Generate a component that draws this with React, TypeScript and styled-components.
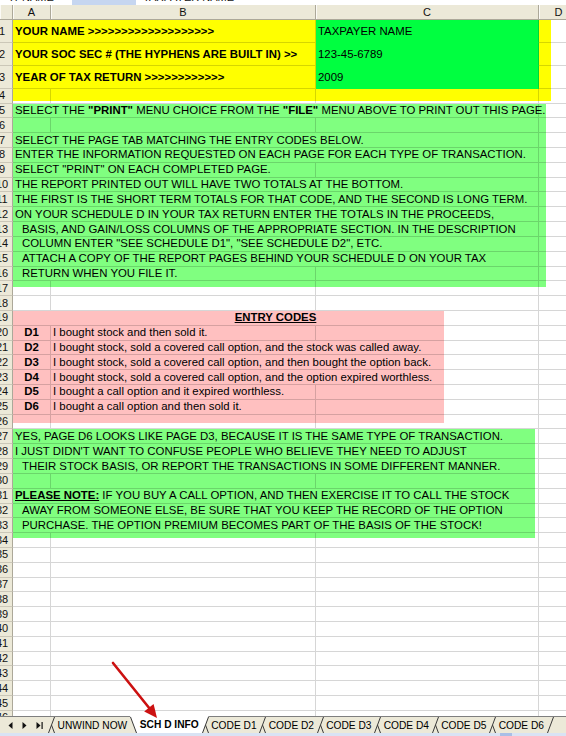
import React from 'react';
import styled, { createGlobalStyle } from 'styled-components';

const GlobalStyle = createGlobalStyle`
  html, body { margin: 0; padding: 0; width: 566px; height: 736px; overflow: hidden; background: #fff; }
  body { font-family: "Liberation Sans", Arial, sans-serif; color: #000; }
  #root { width: 566px; height: 736px; }
`;

const COLS = '13px 38px 265px 223px 40px';
const LINE = 'rgba(0,0,0,0.16)';
const Y = '#ffff00';
const G1 = '#00ff40';
const G2 = '#80ff80';
const P = '#ffc0c0';

const Page = styled.div`
  position: relative;
  width: 566px;
  height: 736px;
  display: flex;
  flex-direction: column;
  overflow: hidden;
`;

/* ---------- formula bar remnant ---------- */
const TopStrip = styled.div`
  height: 5px;
  flex: none;
  display: flex;
  overflow: hidden;
  background: #fff;
`;
const NameBox = styled.div`
  width: 64px;
  padding-left: 8px;
  flex: none;
`;
const FxArea = styled.div`
  width: 64px;
  flex: none;
  background: #c6d6f0;
`;
const FormulaArea = styled.div`
  flex: 1;
  padding-left: 7px;
`;
const StripText = styled.span`
  display: block;
  font-size: 11px;
  line-height: 11px;
  margin-top: -8px;
  white-space: pre;
  color: #111;
`;

/* ---------- sheet ---------- */
const Sheet = styled.div`
  flex: 1;
  min-height: 0;
  overflow: hidden;
`;
const HeaderRow = styled.div`
  display: grid;
  grid-template-columns: ${COLS};
  height: 15px;
  box-sizing: border-box;
  background: #ece9d8;
  border-bottom: 1px solid #aca899;
`;
const ColHead = styled.div`
  border-right: 1px solid #aca899;
  box-shadow: inset 1px 0 #fbfaf5;
  display: flex;
  align-items: center;
  justify-content: center;
  font-size: 11px;
  line-height: 1;
  color: #111;
`;
const Row = styled.div<{ $h: number }>`
  display: grid;
  grid-template-columns: ${COLS};
  height: ${(p) => p.$h}px;
`;
const RowHead = styled.div`
  box-sizing: border-box;
  background: #ece9d8;
  border-right: 1px solid #aca899;
  border-bottom: 1px solid #cbc7b8;
  display: flex;
  align-items: center;
  justify-content: flex-end;
  overflow: hidden;
`;
const RowNum = styled.span`
  flex: none;
  width: 20px;
  text-align: center;
  font-size: 11px;
  line-height: 1;
  color: #111;
`;

interface CellStyle {
  $span?: number;
  $fill?: string;
  $fw?: string;
  $fh?: string;
  $bold?: boolean;
  $center?: boolean;
  $indent?: number;
  $noBottom?: boolean;
}

const Cell = styled.div<CellStyle>`
  grid-column: span ${(p) => p.$span ?? 1};
  box-sizing: border-box;
  min-width: 0;
  border-right: 1px solid ${LINE};
  border-bottom: 1px solid ${(p) => (p.$noBottom ? 'transparent' : LINE)};
  background: ${(p) =>
    p.$fill
      ? `linear-gradient(${p.$fill}, ${p.$fill}) no-repeat 0 0 / ${p.$fw ?? '100%'} ${p.$fh ?? '100%'}`
      : 'transparent'};
  background-origin: border-box;
  display: flex;
  align-items: center;
  justify-content: ${(p) => (p.$center ? 'center' : 'flex-start')};
  padding: 0 2px 0 ${(p) => 2 + (p.$indent ?? 0)}px;
  font-size: 11.4px;
  font-weight: ${(p) => (p.$bold ? 700 : 400)};
  overflow: visible;
`;
const CellText = styled.span`
  position: relative;
  z-index: 1;
  white-space: pre;
  line-height: 13px;
`;
const Under = styled.span`
  text-decoration: underline;
  font-weight: 700;
`;
const B = styled.b`
  font-weight: 700;
`;

type CellSpec = {
  span?: number;
  fill?: string;
  fw?: string;
  fh?: string;
  content?: React.ReactNode;
  bold?: boolean;
  center?: boolean;
  indent?: number;
  noBottom?: boolean;
};
type RowSpec = { h: number; cells: CellSpec[] };

const RH = 14.825;
const IND = 7;

const greenText = (content: React.ReactNode, indent = 0, span = 3): CellSpec[] =>
  span === 3
    ? [{ span: 3, fill: G2, content, indent }, { fill: G2, fw: '7px' }]
    : [{ span: 2, fill: G2, content, indent }, { fill: G2 }, { fill: G2, fw: '7px' }];

const greenEmpty: CellSpec[] = [{ fill: G2 }, { fill: G2 }, { fill: G2 }, { fill: G2, fw: '7px' }];
const empty: CellSpec[] = [{}, {}, {}, {}];

const pinkShort = (code: string, text: string): CellSpec[] => [
  { fill: P, content: code, bold: true, center: true },
  { fill: P, content: text },
  { fill: P, fw: '128px' },
  {},
];
const pinkLong = (code: string, text: string): CellSpec[] => [
  { fill: P, content: code, bold: true, center: true },
  { span: 2, fill: P, fw: '393px', content: text },
  {},
];
const green2Text = (content: React.ReactNode, indent = 0): CellSpec[] => [
  { span: 3, fill: G2, fw: '522px', content, indent },
  {},
];

const rows: RowSpec[] = [
  {
    h: 23,
    cells: [
      { span: 2, fill: Y, bold: true, content: 'YOUR NAME ' + '>'.repeat(19) },
      { fill: G1, content: 'TAXPAYER NAME', noBottom: true },
      { fill: Y, fw: '12px' },
    ],
  },
  {
    h: 23,
    cells: [
      { span: 2, fill: Y, bold: true, content: 'YOUR SOC SEC # (THE HYPHENS ARE BUILT IN) >>' },
      { fill: G1, content: '123-45-6789', noBottom: true },
      { fill: Y, fw: '12px' },
    ],
  },
  {
    h: 23,
    cells: [
      { span: 2, fill: Y, bold: true, content: 'YEAR OF TAX RETURN ' + '>'.repeat(12) },
      { fill: G1, content: '2009', noBottom: true },
      { fill: Y, fw: '12px' },
    ],
  },
  {
    h: 14.6,
    cells: [
      { fill: Y, fh: '12px' },
      { fill: Y, fh: '12px' },
      { fill: Y, fh: '12px' },
      { fill: Y, fw: '12px', fh: '12px' },
    ],
  },
  {
    h: RH,
    cells: greenText(
      <>
        SELECT THE <B>"PRINT"</B> MENU CHOICE FROM THE <B>"FILE"</B> MENU ABOVE TO PRINT OUT THIS PAGE.
      </>
    ),
  },
  { h: RH, cells: greenEmpty },
  { h: RH, cells: greenText('SELECT THE PAGE TAB MATCHING THE ENTRY CODES BELOW.') },
  { h: RH, cells: greenText('ENTER THE INFORMATION REQUESTED ON EACH PAGE FOR EACH TYPE OF TRANSACTION.') },
  { h: RH, cells: greenText('SELECT "PRINT" ON EACH COMPLETED PAGE.', 0, 2) },
  { h: RH, cells: greenText('THE REPORT PRINTED OUT WILL HAVE TWO TOTALS AT THE BOTTOM.') },
  { h: RH, cells: greenText('THE FIRST IS THE SHORT TERM TOTALS FOR THAT CODE, AND THE SECOND IS LONG TERM.') },
  { h: RH, cells: greenText('ON YOUR SCHEDULE D IN YOUR TAX RETURN ENTER THE TOTALS IN THE PROCEEDS,') },
  { h: RH, cells: greenText('BASIS, AND GAIN/LOSS COLUMNS OF THE APPROPRIATE SECTION. IN THE DESCRIPTION', IND) },
  { h: RH, cells: greenText('COLUMN ENTER "SEE SCHEDULE D1", "SEE SCHEDULE D2", ETC.', IND) },
  { h: RH, cells: greenText('ATTACH A COPY OF THE REPORT PAGES BEHIND YOUR SCHEDULE D ON YOUR TAX', IND) },
  { h: RH, cells: greenText('RETURN WHEN YOU FILE IT.', IND, 2) },
  {
    h: RH,
    cells: [
      { fill: G2, fh: '6px' },
      { fill: G2, fh: '6px' },
      { fill: G2, fh: '6px' },
      { fill: G2, fw: '7px', fh: '6px' },
    ],
  },
  { h: RH, cells: empty },
  {
    h: RH,
    cells: [{ span: 3, fill: P, fw: '431px', center: true, content: <Under>ENTRY CODES</Under> }, {}],
  },
  { h: RH, cells: pinkShort('D1', 'I bought stock and then sold it.') },
  { h: RH, cells: pinkLong('D2', 'I bought stock, sold a covered call option, and the stock was called away.') },
  { h: RH, cells: pinkLong('D3', 'I bought stock, sold a covered call option, and then bought the option back.') },
  { h: RH, cells: pinkLong('D4', 'I bought stock, sold a covered call option, and the option expired worthless.') },
  { h: RH, cells: pinkShort('D5', 'I bought a call option and it expired worthless.') },
  { h: RH, cells: pinkShort('D6', 'I bought a call option and then sold it.') },
  {
    h: RH,
    cells: [{ fill: P, fh: '8px' }, { fill: P, fh: '8px' }, { fill: P, fw: '128px', fh: '8px' }, {}],
  },
  { h: RH, cells: green2Text('YES, PAGE D6 LOOKS LIKE PAGE D3, BECAUSE IT IS THE SAME TYPE OF TRANSACTION.') },
  { h: RH, cells: green2Text("I JUST DIDN'T WANT TO CONFUSE PEOPLE WHO BELIEVE THEY NEED TO ADJUST") },
  { h: RH, cells: green2Text('THEIR STOCK BASIS, OR REPORT THE TRANSACTIONS IN SOME DIFFERENT MANNER.', IND) },
  { h: RH, cells: [{ fill: G2 }, { fill: G2 }, { fill: G2, fw: '219px' }, {}] },
  {
    h: RH,
    cells: green2Text(
      <>
        <Under>PLEASE NOTE:</Under> IF YOU BUY A CALL OPTION, AND THEN EXERCISE IT TO CALL THE STOCK
      </>
    ),
  },
  { h: RH, cells: green2Text('AWAY FROM SOMEONE ELSE, BE SURE THAT YOU KEEP THE RECORD OF THE OPTION', IND) },
  { h: RH, cells: green2Text('PURCHASE. THE OPTION PREMIUM BECOMES PART OF THE BASIS OF THE STOCK!', IND) },
  {
    h: RH,
    cells: [{ fill: G2, fh: '5px' }, { fill: G2, fh: '5px' }, { fill: G2, fw: '219px', fh: '5px' }, {}],
  },
  ...Array.from({ length: 12 }, () => ({ h: RH, cells: empty })),
];

/* ---------- sheet tabs ---------- */
const TabBar = styled.div`
  height: 17px;
  flex: none;
  box-sizing: border-box;
  display: flex;
  align-items: stretch;
  background: #ece9d8;
  border-top: 1px solid #7f7f7f;
  font-size: 10.2px;
`;
const Nav = styled.div`
  width: 48px;
  flex: none;
  display: flex;
  align-items: center;
  padding-left: 8px;
  box-sizing: border-box;
  gap: 9px;
`;
const Tab = styled.div<{ $active?: boolean }>`
  flex: none;
  display: flex;
  align-items: center;
  padding: 0 ${(p) => (p.$active ? 3 : 2.6)}px;
  font-weight: ${(p) => (p.$active ? 700 : 400)};
  background: ${(p) => (p.$active ? '#fff' : 'transparent')};
  margin-top: ${(p) => (p.$active ? '-1px' : '0')};
  white-space: pre;
  color: #000;
`;
const Edge = styled.svg<{ $lift?: boolean }>`
  flex: none;
  width: 7px;
  height: auto;
  margin-top: ${(p) => (p.$lift ? '-1px' : '0')};
  overflow: visible;
`;
const BottomStrip = styled.div`
  height: 3px;
  flex: none;
  display: flex;
  background: #d9e3f4;
`;
const StripGap = styled.div`
  width: 500px;
  flex: none;
`;
const StripThumb = styled.div`
  width: 12px;
  flex: none;
  background: #a9bfe6;
`;

const Sep = () => (
  <Edge viewBox="0 0 7 16" preserveAspectRatio="none">
    <path d="M6.5 0 L0.5 16 M3.5 8 L6.5 16" stroke="#3a3a3a" strokeWidth="1" fill="none" />
  </Edge>
);
const ActiveLeft = () => (
  <Edge viewBox="0 0 7 17" preserveAspectRatio="none" $lift>
    <polygon points="0,0 7,0 7,17 6.5,17" fill="#fff" />
    <path d="M0.5 1 L6.5 17" stroke="#3a3a3a" strokeWidth="1" fill="none" />
  </Edge>
);
const ActiveRight = () => (
  <Edge viewBox="0 0 7 17" preserveAspectRatio="none" $lift>
    <polygon points="0,0 6.5,0 0.5,17 0,17" fill="#fff" />
    <path d="M6.5 1 L0.5 17 M3.5 9 L6.5 17" stroke="#3a3a3a" strokeWidth="1" fill="none" />
  </Edge>
);
const EndSep = () => (
  <Edge viewBox="0 0 7 16" preserveAspectRatio="none">
    <path d="M6.5 0 L0.5 16" stroke="#3a3a3a" strokeWidth="1" fill="none" />
  </Edge>
);

const NavIcon = ({ kind }: { kind: 'prev' | 'next' | 'last' }) => (
  <svg width={kind === 'last' ? 7 : 5} height="7" viewBox={kind === 'last' ? '0 0 7 7' : '0 0 5 7'}>
    {kind === 'prev' && <polygon points="4.5,0 0.5,3.5 4.5,7" fill="#111" />}
    {kind === 'next' && <polygon points="0.5,0 4.5,3.5 0.5,7" fill="#111" />}
    {kind === 'last' && (
      <>
        <polygon points="0.5,0 4.5,3.5 0.5,7" fill="#111" />
        <rect x="5.5" y="0" width="1.2" height="7" fill="#111" />
      </>
    )}
  </svg>
);

const ArrowSvg = styled.svg`
  position: absolute;
  left: 105px;
  top: 655px;
  width: 60px;
  height: 70px;
  pointer-events: none;
`;

const codeTabs = ['CODE D1', 'CODE D2', 'CODE D3', 'CODE D4', 'CODE D5', 'CODE D6'];

export default function App() {
  return (
    <>
      <GlobalStyle />
      <Page>
        <TopStrip>
          <NameBox>
            <StripText>TPNAME</StripText>
          </NameBox>
          <FxArea />
          <FormulaArea>
            <StripText>TAXPAYER NAME</StripText>
          </FormulaArea>
        </TopStrip>

        <Sheet>
          <HeaderRow>
            <ColHead />
            <ColHead>A</ColHead>
            <ColHead>B</ColHead>
            <ColHead>C</ColHead>
            <ColHead>D</ColHead>
          </HeaderRow>
          {rows.map((r, i) => (
            <Row key={i} $h={r.h}>
              <RowHead>
                <RowNum>{i + 1}</RowNum>
              </RowHead>
              {r.cells.map((c, j) => (
                <Cell
                  key={j}
                  $span={c.span}
                  $fill={c.fill}
                  $fw={c.fw}
                  $fh={c.fh}
                  $bold={c.bold}
                  $center={c.center}
                  $indent={c.indent}
                  $noBottom={c.noBottom}
                >
                  {c.content !== undefined && <CellText>{c.content}</CellText>}
                </Cell>
              ))}
            </Row>
          ))}
        </Sheet>

        <TabBar>
          <Nav>
            <NavIcon kind="prev" />
            <NavIcon kind="next" />
            <NavIcon kind="last" />
          </Nav>
          <Sep />
          <Tab>UNWIND NOW</Tab>
          <ActiveLeft />
          <Tab $active>SCH D INFO</Tab>
          <ActiveRight />
          {codeTabs.map((t, i) => (
            <React.Fragment key={t}>
              <Tab>{t}</Tab>
              {i < codeTabs.length - 1 ? <Sep /> : <EndSep />}
            </React.Fragment>
          ))}
        </TabBar>
        <BottomStrip>
          <StripGap />
          <StripThumb />
        </BottomStrip>

        <ArrowSvg viewBox="0 0 60 70">
          <line x1="8" y1="8" x2="44.8" y2="53.8" stroke="#cc1111" strokeWidth="2.6" strokeLinecap="round" />
          <polygon points="52,63 39.2,56.6 48.6,49.1" fill="#cc1111" />
        </ArrowSvg>
      </Page>
    </>
  );
}
